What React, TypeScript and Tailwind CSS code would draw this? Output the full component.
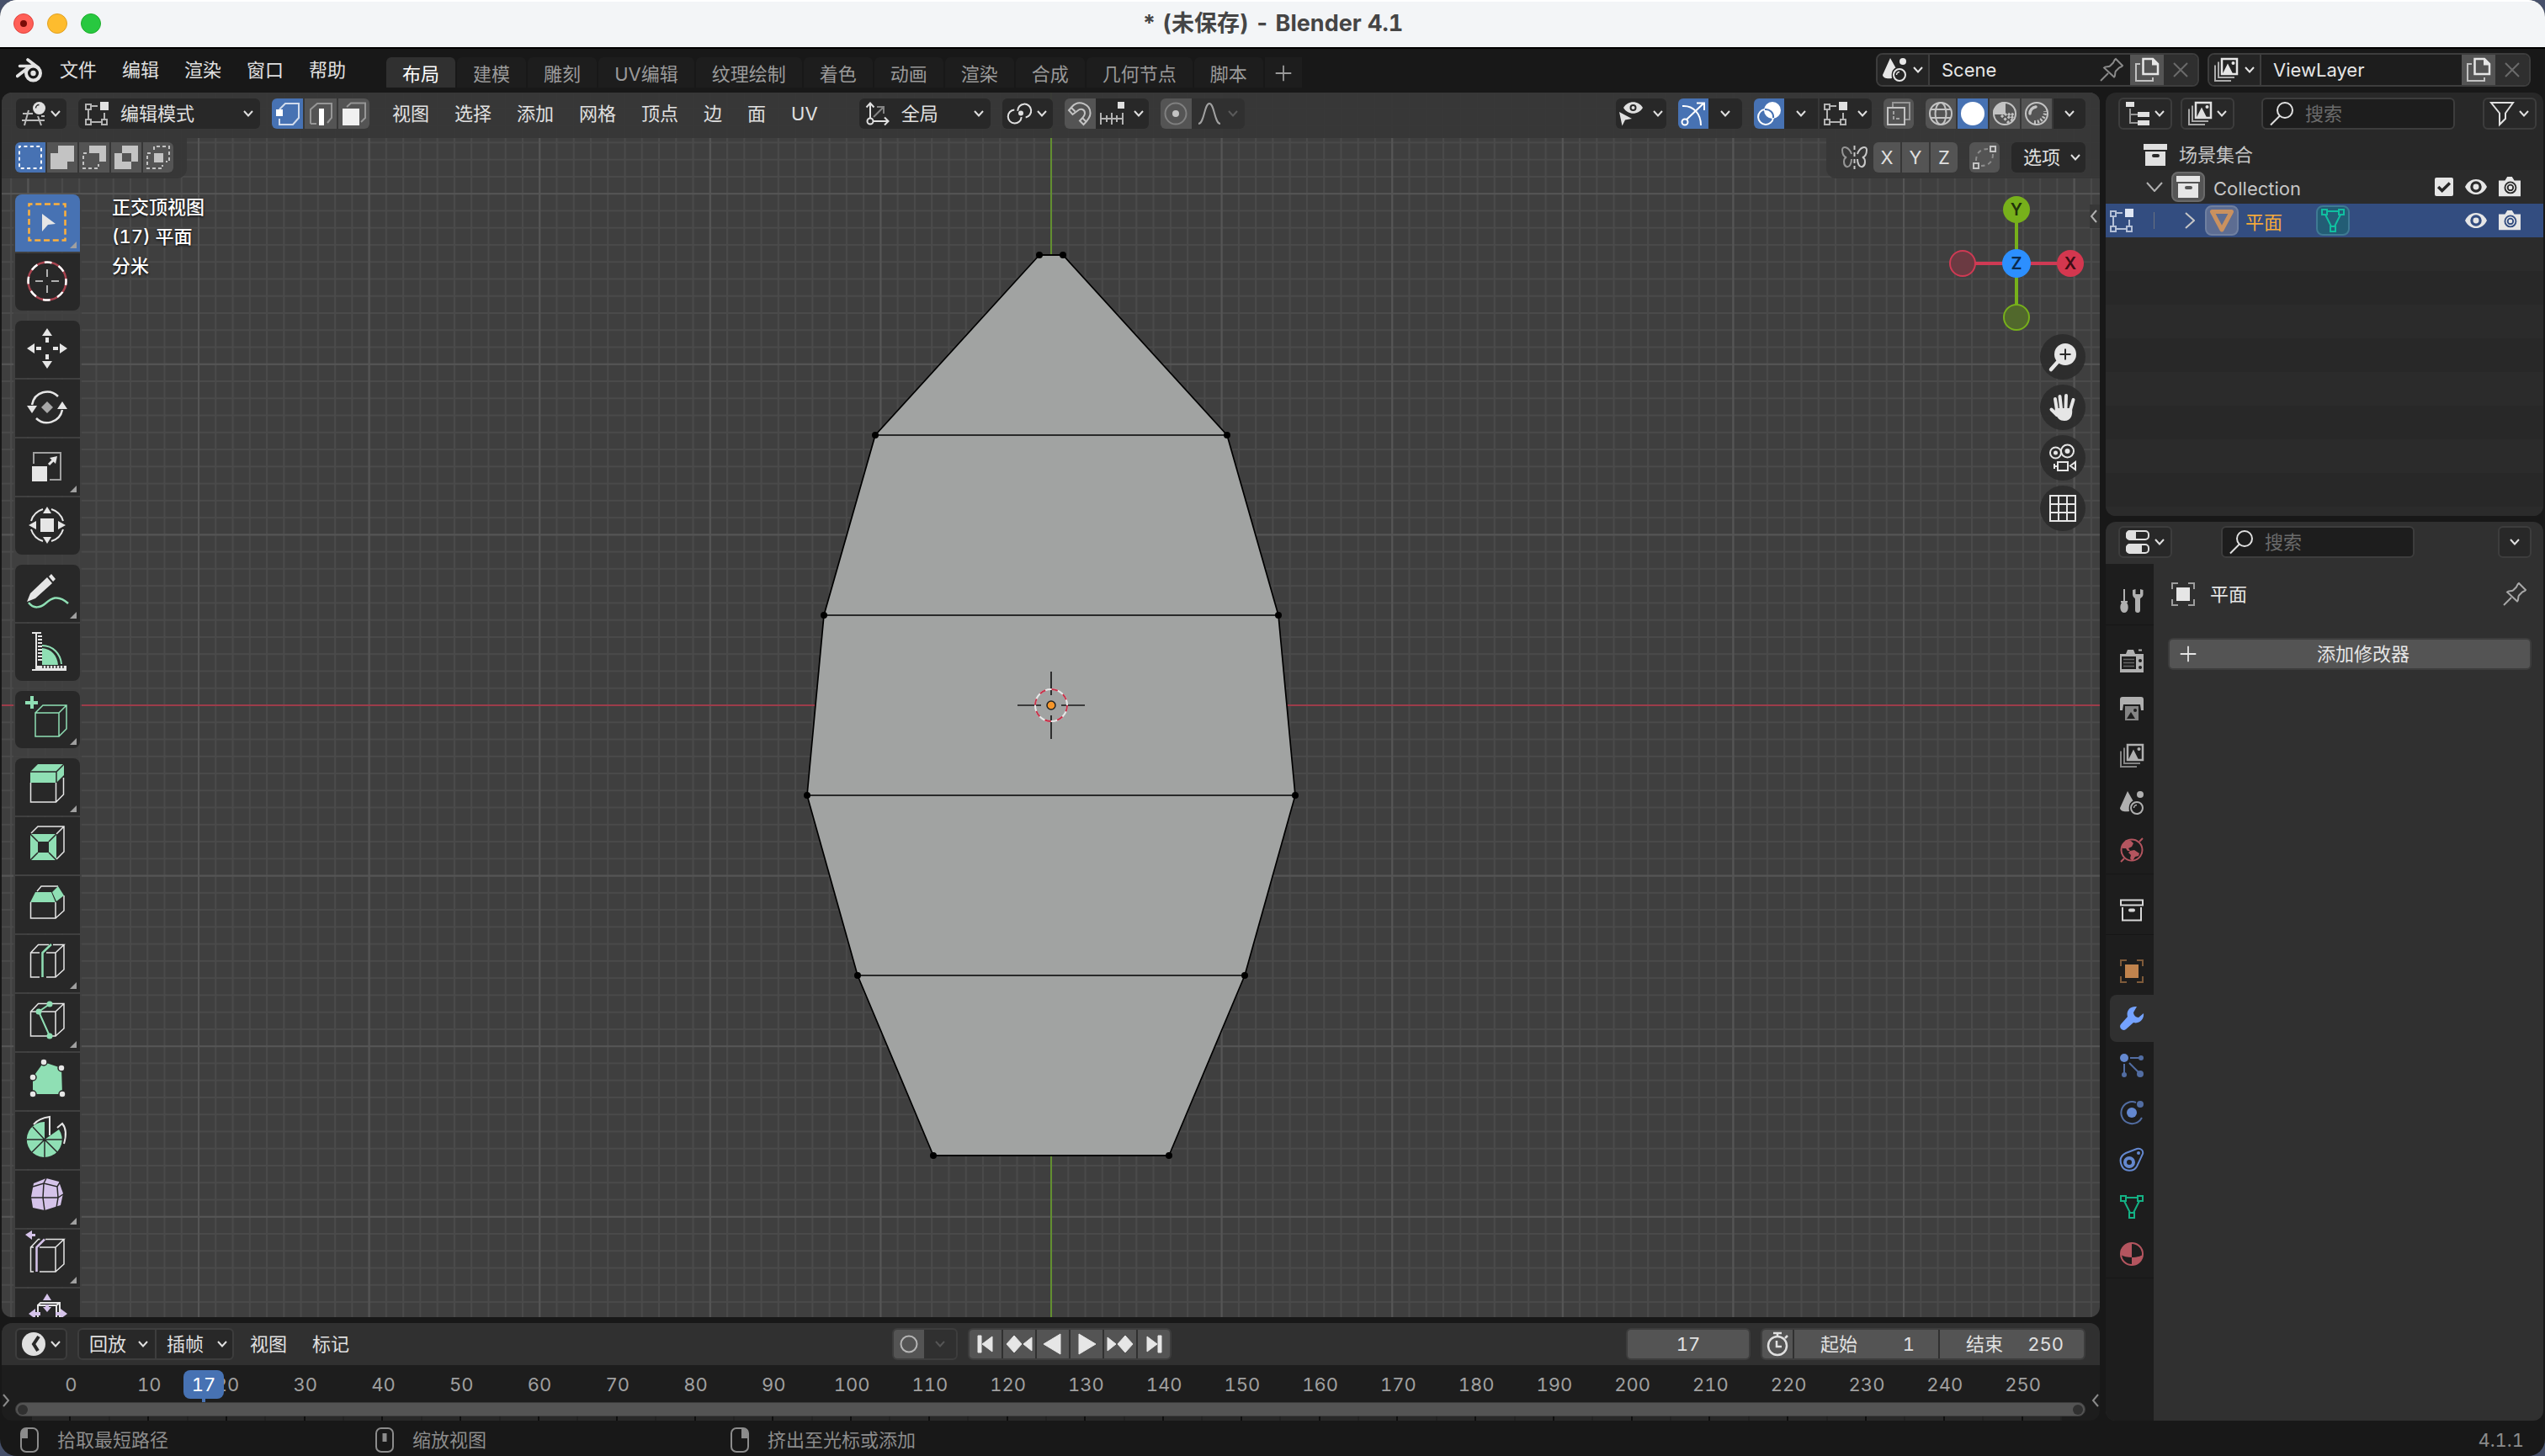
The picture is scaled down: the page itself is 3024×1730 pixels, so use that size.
import type { ReactNode } from 'react';

type IconProps = { className?: string };

const Svg = ({ className = 'w-7 h-7', size = 28, children }: IconProps & { size?: number; children: ReactNode }) => (
  <svg
    viewBox={`0 0 ${size} ${size}`}
    className={`shrink-0 overflow-visible ${className}`}
    fill="none"
    stroke="currentColor"
    strokeWidth="2"
    aria-hidden="true"
  >
    {children}
  </svg>
);

const Chevron = ({ className = '' }: IconProps) => (
  <svg viewBox="0 0 12 8" className={`w-3 h-2 shrink-0 ${className}`} fill="none" stroke="currentColor" strokeWidth="2" aria-hidden="true">
    <path d="M1 1l5 5.500 5-5.500" />
  </svg>
);

/* ---------- 28px icons ---------- */

const BlenderLogo = () => (
  <svg viewBox="0 0 31 29" className="w-[31px] h-[29px] shrink-0" fill="none" stroke="#e3e3e3" aria-hidden="true">
    <circle cx="20.500" cy="18" r="8.500" strokeWidth="4" />
    <circle cx="20.500" cy="18" r="3.200" fill="#e3e3e3" stroke="none" />
    <path d="M1.500 21.500L17 9.500M4.500 9.500h14M14 2l12.500 9.500" strokeWidth="3.600" strokeLinecap="round" />
  </svg>
);

const SceneIcon = (p: IconProps) => (
  <Svg {...p}>
    <path d="M9 0l6.500 11.500c-4 2-5.500 6-4.500 12.500C5 25 0 23.500 0 20z" fill="currentColor" stroke="none" />
    <circle cx="24" cy="4" r="4" fill="currentColor" stroke="none" />
    <circle cx="20" cy="20" r="7" />
    <path d="M16.500 20a3.500 3.500 0 0 1 3.500-3.500" strokeWidth="1.500" />
  </Svg>
);

const LayersIcon = (p: IconProps) => (
  <Svg {...p}>
    <path d="M9 1h18v18H9z" strokeWidth="2.500" />
    <path d="M10 18.500l6-12 6 12z" fill="currentColor" stroke="none" />
    <circle cx="22.500" cy="6" r="2" fill="currentColor" stroke="none" />
    <path d="M5 4.500v18.500h19M1 8.500v18.500h19" opacity=".7" />
  </Svg>
);

const CopyIcon = (p: IconProps) => (
  <Svg {...p}>
    <path d="M9.500 1h11.500l6 6v12H9.500z" strokeWidth="2.500" />
    <path d="M20 0v8.500h8z" fill="currentColor" stroke="none" />
    <path d="M6 7H1v20h20v-4" opacity=".75" />
  </Svg>
);

const PinIcon = (p: IconProps) => (
  <Svg {...p}>
    <path d="M19 1l8 8c-1 2-3 1.500-4 2.500l-4 4c-1.500 1.500 0 6-2 7L5 11.500c1.500-2 5.500-.5 7-2l4-4C17 4 17 2 19 1z" />
    <path d="M10 18l-9 9" />
  </Svg>
);

const CloseIcon = (p: IconProps) => (
  <Svg {...p}>
    <path d="M6 6l16 16M22 6L6 22" />
  </Svg>
);

const EditModeIcon = (p: IconProps) => (
  <Svg {...p}>
    <path d="M1 3h6v6H1zM1 21h6v6H1zM20 21h6v6h-6zM7 5h8M4 9v12M7 24h13M23 13v8" opacity=".75" />
    <path d="M18 0h10v10H18z" fill="currentColor" stroke="none" />
  </Svg>
);

const View3DIcon = () => (
  <Svg>
    <path d="M1 14h12M0 22h27M8 10L3 28M19 17l4 11M23 17h4" opacity=".8" />
    <circle cx="20.500" cy="7.500" r="7.500" fill="currentColor" stroke="none" />
    <path d="M16.500 7.500a4 4 0 0 1 4-4" stroke="#282828" strokeWidth="1.500" />
  </Svg>
);

const VertexIcon = () => (
  <Svg>
    <path d="M4 9l7-7h16v17l-7 8H4v-7" opacity=".75" />
    <path d="M0 9h8v8H0z" fill="currentColor" stroke="none" />
  </Svg>
);

const EdgeIcon = () => (
  <Svg>
    <path d="M2 26V9l8-7h17v17l-5 6M2 26h7" opacity=".6" />
    <path d="M12 8h6v20h-6z" fill="#fff" stroke="none" />
  </Svg>
);

const FaceIcon = () => (
  <Svg>
    <path d="M5 6l5-4.500h17V19l-5 5" opacity=".6" />
    <path d="M0 8h20v20H0z" fill="#f0f0f0" stroke="none" />
  </Svg>
);

const OrientationIcon = () => (
  <Svg>
    <circle cx="5" cy="23" r="3.500" />
    <path d="M5 19V3M0.500 6.500L5 1.500l4.500 5M9 23h17M22 18.500l4.500 4.500-4.500 4.500" />
    <path d="M9 18L20 7M13 6h8v8" opacity=".5" />
  </Svg>
);

const PivotIcon = () => (
  <Svg>
    <path d="M11 11a8 8 0 1 1 10 7M16 18a8 8 0 1 1-9-8" transform="rotate(4 14 14)" />
    <circle cx="15" cy="13.500" r="3" fill="currentColor" stroke="none" />
  </Svg>
);

const MagnetIcon = () => (
  <Svg>
    <path d="M1 10l4-4.500C13-3 27 3 26.500 14c0 5-4 9-8 13l-4.500-4.500c3-3 6-5.500 6-9 0-5-5-6-8.500-3L5.500 15z" />
    <path d="M4 7l4.500 4.500M22 24l-4.500-4.500" />
  </Svg>
);

const IncrementIcon = () => (
  <Svg>
    <path d="M1 13v14M27 13v14M1 20h26M8 16v8M14 13v14M20 16v8" opacity=".75" />
    <path d="M21 0h8v8h-8z" fill="currentColor" stroke="none" />
  </Svg>
);

const ProportionalIcon = () => (
  <Svg>
    <circle cx="14" cy="14" r="12.500" opacity=".4" />
    <circle cx="14" cy="14" r="4" fill="currentColor" stroke="none" />
  </Svg>
);

const FalloffIcon = () => (
  <Svg>
    <path d="M1 26c7 0 7-24 13-24s6 24 13 24" />
  </Svg>
);

const VisibilityIcon = () => (
  <Svg>
    <path d="M5 7c5-9 18-9 23 0-5 9-18 9-23 0z" fill="currentColor" stroke="none" />
    <circle cx="16.500" cy="7" r="4" fill="#282828" stroke="none" />
    <circle cx="16.500" cy="7" r="2" fill="currentColor" stroke="none" />
    <path d="M0 12l15 8-8 1.500-3.500 7z" fill="currentColor" stroke="none" />
  </Svg>
);

const GizmoIcon = () => (
  <Svg>
    <path d="M1 5c13-1 22 9 22 23M6 21L26 2M18 1.500h9V10" />
    <circle cx="4" cy="24" r="3.500" fill="#4772b3" />
  </Svg>
);

const OverlayIcon = () => (
  <Svg>
    <circle cx="18" cy="10" r="10" fill="currentColor" stroke="none" />
    <path d="M9 9a9 9 0 1 0 10 10" />
    <path d="M9 9a9 9 0 0 1 10 10" stroke="#4772b3" />
  </Svg>
);

const XrayIcon = () => (
  <Svg>
    <path d="M7 6V1h20v20h-5" opacity=".6" />
    <path d="M1 7h20v20H1z" />
    <path d="M8 11v9h9" strokeDasharray="4 2" opacity=".7" />
  </Svg>
);

const WireIcon = () => (
  <Svg>
    <circle cx="14" cy="14" r="13" />
    <ellipse cx="14" cy="14" rx="6.500" ry="13" />
    <path d="M2 9h24M2 19h24" />
  </Svg>
);

const SolidIcon = () => (
  <Svg>
    <circle cx="14" cy="14" r="14" fill="currentColor" stroke="none" />
  </Svg>
);

const MatPreviewIcon = () => (
  <Svg>
    <circle cx="14" cy="14" r="13" />
    <path d="M14 14V1A13 13 0 0 0 1 14z" fill="currentColor" />
    <path d="M14 14l10 9M18 14l8 7M10 16l9 9M22 14l4 3" strokeWidth="3" strokeDasharray="3 2" />
  </Svg>
);

const RenderedIcon = () => (
  <Svg>
    <circle cx="14" cy="14" r="13" />
    <path d="M6 14a8 8 0 0 1 7-8" strokeWidth="3.500" strokeLinecap="round" />
    <path d="M11 24a12 12 0 0 0 13-13" strokeWidth="4" strokeDasharray="2 2" />
  </Svg>
);

const ButterflyIcon = () => (
  <svg viewBox="0 0 31 28" className="w-[31px] h-7 shrink-0" fill="none" stroke="#c8c8c8" strokeWidth="2" aria-hidden="true">
    <path d="M15.500 0v28" strokeDasharray="5 3" />
    <path d="M12 10C9 1 1 0 1 5c0 4 1 8 5 9-4 1-4 9 0 11 4 1 6-4 6-9" opacity=".65" />
    <path d="M19 10c3-9 11-10 11-5 0 4-1 8-5 9 4 1 4 9 0 11-4 1-6-4-6-9" />
  </svg>
);

const AutoMergeIcon = () => (
  <Svg>
    <path d="M21 1h6v6h-6zM1 21h6v6H1z" />
    <path d="M4 18C4 9 9 4 18 4M24 10c0 9-5 14-14 14" strokeDasharray="5 4" opacity=".5" />
  </Svg>
);

const FilterIcon = () => (
  <Svg>
    <path d="M1 1h26l-9 12.500V20l-7 7V13.500z" />
  </Svg>
);

const SearchIcon = () => (
  <Svg>
    <circle cx="18" cy="10" r="9" />
    <path d="M12 16.500L1 27.500" />
  </Svg>
);

const OutlinerIcon = () => (
  <Svg>
    <path d="M5 8v17h9M5 15h9" opacity=".6" />
    <path d="M0 0h10v6H0zM14 12h14v6H14zM14 22h14v6H14z" fill="currentColor" stroke="none" />
  </Svg>
);

const PropertiesIcon = () => (
  <Svg>
    <rect x="1" y="1" width="26" height="10" rx="4" />
    <path d="M5 0h7v12H5a5 5 0 0 1-5-5V5a5 5 0 0 1 5-5zM5 16h14v12H5a5 5 0 0 1-5-5v-2a5 5 0 0 1 5-5z" fill="currentColor" stroke="none" />
    <rect x="1" y="17" width="26" height="10" rx="4" />
  </Svg>
);

const CollectionIcon = (p: IconProps) => (
  <Svg {...p}>
    <path d="M0 1h28v7H0z" fill="currentColor" stroke="none" />
    <path d="M2 10h24v17H2zM12 13a1.500 1.500 0 0 0 0 4h5a1.500 1.500 0 0 0 0-4z" fill="currentColor" fillRule="evenodd" stroke="none" />
  </Svg>
);

const CollectionOutlineIcon = () => (
  <Svg>
    <path d="M1 1.500h26v6H1zM3 10v15.500h22V10" />
    <path d="M12 13.500h4" strokeWidth="4" strokeLinecap="round" />
  </Svg>
);

const EyeIcon = () => (
  <Svg className="w-[26px] h-[26px]">
    <path d="M0 14C6 1 22 1 28 14 22 27 6 27 0 14z" fill="currentColor" stroke="none" />
    <circle cx="14" cy="14" r="5.500" stroke="var(--hole)" strokeWidth="3.500" />
  </Svg>
);

const CameraIcon = () => (
  <Svg className="w-[26px] h-[26px]">
    <path d="M0 6h8l3-5h6l3 5h8v20H0z" fill="currentColor" stroke="none" />
    <circle cx="15" cy="15" r="7" stroke="var(--hole)" />
    <circle cx="15" cy="15" r="3.500" stroke="var(--hole)" />
  </Svg>
);

const MeshTriIcon = () => (
  <Svg>
    <path d="M2.500 3.500h23L14 25z" strokeWidth="5" strokeLinejoin="round" />
  </Svg>
);

const MeshDataIcon = () => (
  <Svg>
    <path d="M1 1h6v6H1zM21 1h6v6h-6zM11 21h6v6h-6zM7 3h14M5 7l7 14M23 7l-7 14" />
  </Svg>
);

const ToolPropIcon = () => (
  <Svg>
    <path d="M5 0v14" />
    <path d="M1 14h8v2H8c3 4 2 12-3 12s-6-8-3-12H1z" fill="currentColor" stroke="none" />
    <path
      d="M15 1v5c0 4 3 4 3 6v13a3 3 0 0 0 6 0V12c0-2 3.500-2 3.500-6V1L24 0v6h-5.500V0zM21 23.500v2"
      fill="currentColor"
      stroke="none"
    />
  </Svg>
);

const RenderIcon = () => (
  <Svg>
    <path
      d="M7 5l2-5h7l2 5h10v22H0V5zM2 8v15h17V8z"
      fill="currentColor"
      fillRule="evenodd"
      stroke="none"
    />
    <path d="M4 11.500h13M4 15.500h13M4 19.500h13" opacity=".5" strokeWidth="1.500" />
    <path d="M22 0.500h4" />
    <circle cx="24" cy="13" r="2" fill="#1d1d1d" stroke="none" />
    <circle cx="24" cy="21" r="2" fill="#1d1d1d" stroke="none" />
  </Svg>
);

const OutputIcon = () => (
  <Svg>
    <path d="M3 0h22a3 3 0 0 1 3 3v13h-3l-1-7H4l-1 7H0V3a3 3 0 0 1 3-3z" fill="currentColor" stroke="none" />
    <path d="M6 11h16v17H6z" fill="currentColor" opacity=".7" stroke="none" />
    <path d="M8 26l5-8 5 8z" fill="#1d1d1d" stroke="none" />
    <circle cx="18" cy="16" r="2" fill="#1d1d1d" stroke="none" />
  </Svg>
);

const WorldIcon = () => (
  <Svg>
    <circle cx="14" cy="14" r="12.500" />
    <path d="M23 4l4-4M5 24l-4 4" />
    <path d="M2 9l5-7 6 1 3 3-2 4-4 2 2 3h-3l-2-3-4 0zM12 15l5-1 6 4-1 3-4 1-3 5-3-3 1-4-3-3z" fill="currentColor" stroke="none" />
  </Svg>
);

const ObjectIcon = () => (
  <Svg>
    <path d="M6 6h16v16H6z" fill="currentColor" stroke="none" />
    <path d="M1 8V1h7M20 1h7v7M27 20v7h-7M8 27H1v-7" opacity=".6" />
  </Svg>
);

const WrenchIcon = () => (
  <Svg>
    <path
      d="M20 0c-8-1-13 5-11 12L1 21c-3 4 2 9 6 6l9-8c7 2 13-4 12-11l-6 5c-3 0-6-3-6-6z"
      fill="currentColor"
      stroke="none"
    />
  </Svg>
);

const ParticlesIcon = () => (
  <Svg>
    <circle cx="5" cy="5" r="5" fill="currentColor" stroke="none" />
    <g opacity=".75">
      <path d="M12 5h11M5 12v11M11 11l12 12" />
      <circle cx="25" cy="5" r="3" fill="currentColor" stroke="none" />
      <circle cx="5" cy="25" r="3" fill="currentColor" stroke="none" />
      <circle cx="24" cy="24" r="4" fill="currentColor" stroke="none" />
    </g>
  </Svg>
);

const PhysicsIcon = () => (
  <Svg>
    <circle cx="14" cy="14" r="6" fill="currentColor" stroke="none" />
    <g opacity=".75">
      <path d="M19 2A13 13 0 1 0 26 20" />
      <circle cx="24" cy="4" r="4" fill="currentColor" stroke="none" />
    </g>
  </Svg>
);

const ConstraintIcon = () => (
  <Svg>
    <path d="M7 6L20 1c5-1 8 2 7 6l-7 15c-4 7-15 6-18-1S1 9 7 6z" />
    <circle cx="11" cy="17" r="5" strokeWidth="4" />
    <circle cx="22" cy="6" r="2" fill="currentColor" stroke="none" />
  </Svg>
);

const MaterialIcon = () => (
  <Svg>
    <circle cx="14" cy="14" r="13" />
    <path d="M14 1v17C9 18 4 17 1 15 1 7 7 1 14 1zM14 27v-9c5 0 10-1 13-3-1 7-6 12-13 12z" fill="currentColor" stroke="none" />
  </Svg>
);

const TimelineIcon = () => (
  <Svg>
    <circle cx="14" cy="14" r="14" fill="currentColor" stroke="none" />
    <path d="M20 5l-6 9 5 8" stroke="#282828" strokeWidth="4" />
  </Svg>
);

const StopwatchIcon = () => (
  <Svg>
    <circle cx="14" cy="16" r="11" strokeWidth="2.500" />
    <path d="M9 1h10M14 1v4M13 10v7h6M23 7l3-3" strokeWidth="2.500" />
  </Svg>
);

/* ---------- toolbar icons, drawn on a 48px square ---------- */

const Tool48 = ({ children }: { children: ReactNode }) => (
  <Svg size={48} className="w-12 h-12">
    {children}
  </Svg>
);

const GREEN = '#8fdfb4';
const LILAC = '#d5c3ea';

const toolGroups: { name: string; menu?: boolean; active?: boolean; icon: ReactNode }[][] = [
  [
    {
      name: '框选',
      menu: true,
      active: true,
      icon: (
        <Tool48>
          <path d="M2.500 2.500h43v43h-43z" stroke="#ffb13b" strokeDasharray="7 3.750" strokeDashoffset="3" strokeWidth="2.500" />
          <path d="M18 14l16 12-9 1-7 8z" fill="#e6e6e6" stroke="none" />
        </Tool48>
      ),
    },
    {
      name: '游标',
      icon: (
        <Tool48>
          <circle cx="24" cy="24" r="22.500" stroke="#a8434f" strokeWidth="2.500" />
          <circle cx="24" cy="24" r="22.500" stroke="#fff" strokeWidth="2.500" strokeDasharray="8.840" strokeDashoffset="4" />
          <path d="M24 10v9M24 29v9M10 24h9M29 24h9" stroke="#b0b0b0" />
        </Tool48>
      ),
    },
  ],
  [
    {
      name: '移动',
      icon: (
        <Tool48>
          <path
            d="M24 0l6 9H18zM24 48l6-9H18zM0 24l9-6v12zM48 24l-9-6v12zM22 11h4v6h-4zM22 31h4v6h-4zM11 22h6v4h-6zM31 22h6v4h-6z"
            fill="currentColor"
            stroke="none"
          />
        </Tool48>
      ),
    },
    {
      name: '旋转',
      icon: (
        <Tool48>
          <path d="M6 21C9 5 27 1 37 11M42 27C39 42 21 47 11 37" strokeWidth="2.500" />
          <path d="M0 22h12l-6 9zM36 26h12l-6-9z" fill="currentColor" stroke="none" />
          <path d="M24 17l7 7-7 7-7-7z" fill="#a8a8a8" stroke="none" />
        </Tool48>
      ),
    },
    {
      name: '缩放',
      menu: true,
      icon: (
        <Tool48>
          <path d="M8 21V8h32v32H27" stroke="#a0a0a0" />
          <path d="M6 24h18v18H6z" fill="currentColor" stroke="none" />
          <path d="M26 22l7-7" strokeWidth="3" />
          <path d="M36 12l-9 2 7 7z" fill="currentColor" stroke="none" />
        </Tool48>
      ),
    },
    {
      name: '变换',
      icon: (
        <Tool48>
          <path d="M19 5A21 21 0 0 0 5 19M29 5a21 21 0 0 1 14 14M19 43A21 21 0 0 1 5 29M29 43a21 21 0 0 0 14-14" />
          <path d="M16 16h16v16H16zM24 2l5 8H19zM24 46l5-8H19zM2 24l9-5v10zM46 24l-9-5v10z" fill="currentColor" stroke="none" />
        </Tool48>
      ),
    },
  ],
  [
    {
      name: '标注',
      menu: true,
      icon: (
        <Tool48>
          <path d="M2 36c6 8 14 6 20 1s14-12 27 0" stroke={GREEN} strokeWidth="2.500" />
          <path d="M0 35l4-10L24 6l6 7-20 18zM26 5l3-3 5 6-3 3z" fill="currentColor" stroke="none" />
        </Tool48>
      ),
    },
    {
      name: '测量',
      icon: (
        <Tool48>
          <path d="M18 17c13 0 22 10 23 22" stroke={GREEN} />
          <path d="M18 20c11 1 18 9 19 20H18z" fill={GREEN} stroke="none" />
          <path d="M6 1h11v2h-5v38h35v6H6v-2h4V3H6z" fill="currentColor" stroke="none" />
          <path d="M13 6h5M13 10h5M13 14h5M13 18h5M13 22h5M13 26h5M13 30h5M13 34h5" strokeWidth="2" />
          <path d="M19 40v4M23 40v4M27 40v4M31 40v4M35 40v4M39 40v4M43 40v4" stroke="#282828" strokeWidth="1.500" />
        </Tool48>
      ),
    },
  ],
  [
    {
      name: '添加立方体',
      menu: true,
      icon: (
        <Tool48>
          <path d="M10 17h28v28H10zM10 17l9-9h28v28l-9 9M38 17l9-9" stroke={GREEN} strokeWidth="1.500" />
          <path d="M6-3v15M-2 5h15" stroke={GREEN} strokeWidth="4" />
        </Tool48>
      ),
    },
  ],
  [
    {
      name: '挤出选区',
      menu: true,
      icon: (
        <Tool48>
          <path d="M4.500 20v23h30V20M34.500 43l9-9V14" strokeWidth="1.500" />
          <path d="M4 7l9-9h31v13l-9 9H4z" fill={GREEN} stroke="none" />
          <path d="M4 7h31v13M35 7l9-9" stroke="#282828" strokeWidth="1.500" />
        </Tool48>
      ),
    },
    {
      name: '内插面',
      icon: (
        <Tool48>
          <path d="M5 10l8-8h31v30l-9 9M35 11l9-9" strokeWidth="1.500" />
          <path d="M4 11h31v31H4zM13 20v13h13V20z" fill={GREEN} fillRule="evenodd" stroke="none" />
          <path d="M4 11l9 9M35 11l-9 9M4 42l9-9M35 42l-9-9" stroke="#282828" strokeWidth="1.500" />
        </Tool48>
      ),
    },
    {
      name: '倒角',
      icon: (
        <Tool48>
          <path d="M4.500 22v19H34V22M34 41l10-9V14M12 9l5-6h20" strokeWidth="1.500" />
          <path d="M4 22l6-12h19l5 12zM30 10l7-7 7 11-9 7z" fill={GREEN} stroke="none" />
        </Tool48>
      ),
    },
    {
      name: '环切',
      menu: true,
      icon: (
        <Tool48>
          <path d="M15 12H4.500v29H15M23 12h11v29H23M4.500 12l9-9.500H26M34 12l10-9.500H31M44 2.500V32L34 41" strokeWidth="1.500" />
          <path d="M18.500 41V12L29 2" stroke={GREEN} strokeWidth="2.500" />
        </Tool48>
      ),
    },
    {
      name: '切割',
      menu: true,
      icon: (
        <Tool48>
          <path d="M4.500 12H34v29H4.500zM4.500 12l9-9.500H44V32l-10 9M34 12l10-9.500" strokeWidth="1.500" />
          <path d="M27 3L14 12l13 29" stroke={GREEN} />
          <g fill={GREEN} stroke="none">
            <circle cx="27" cy="3" r="3.500" />
            <circle cx="14" cy="12" r="3.500" />
            <circle cx="27" cy="41" r="3.500" />
          </g>
        </Tool48>
      ),
    },
    {
      name: '多边形建形',
      icon: (
        <Tool48>
          <path d="M7 40V20L20 2l21 7 1 31z" fill={GREEN} stroke="none" />
          <g fill="#e6e6e6" stroke="#282828" strokeWidth="1.500">
            <circle cx="7" cy="40" r="4" />
            <circle cx="42" cy="40" r="4" />
            <circle cx="41" cy="9" r="4" />
            <circle cx="20" cy="2" r="4" />
            <circle cx="7" cy="20" r="4" />
          </g>
        </Tool48>
      ),
    },
    {
      name: '旋绕',
      icon: (
        <Tool48>
          <path d="M8 6C13 0 19-2 27-3v22M36 10l6-5c5 6 5 14 2 24" strokeWidth="2" />
          <path d="M21 24V3a21 21 0 1 0 17 9z" fill={GREEN} stroke="none" />
          <path d="M21 24H0M21 24h21M21 24v21M21 24L7 9M21 24L6 39M21 24l15 15" stroke="#282828" strokeWidth="1.500" />
        </Tool48>
      ),
    },
    {
      name: '光滑',
      menu: true,
      icon: (
        <Tool48>
          <path d="M8 6l15-6 15 4 5 14-3 14-19 6-14-3-2-13z" fill={LILAC} stroke="none" />
          <path d="M7 10l13-4 16 4 3-5M20 6l3-6M20 6l-1 17 2 15M36 10l1 13-2 12M5 23h32l6-4" stroke="#282828" strokeWidth="1.500" />
        </Tool48>
      ),
    },
    {
      name: '边线滑移',
      menu: true,
      icon: (
        <Tool48>
          <path d="M8 12H4.500v29H8M15 12h19v29H15M4.500 12l9-9.500h2M34 12l10-9.500H22M44 2.500V32L34 41" strokeWidth="1.500" />
          <path d="M11.500 41V12L21 2.500" stroke={LILAC} strokeWidth="2.500" />
          <path d="M-2-3l8-5v4h4v3H6v4z" fill={LILAC} stroke="none" />
        </Tool48>
      ),
    },
    {
      name: '法向缩放',
      menu: true,
      icon: (
        <Tool48>
          <path d="M13 11h22v24H13zM13 11l3-3h23v26l-4 3M35 11l4-3" />
          <path d="M24-3l5 8H19zM24 19l5-6h-3v-3h-4v3h-3zM2 21l8-6v4h6v4h-6v4zM48 21l-8-6v4h-6v4h6v4z" fill={LILAC} stroke="none" />
        </Tool48>
      ),
    },
  ],
];

/* ---------- shared controls ---------- */

const MenuButton = ({ label, outlined, className = '', children }: { label: string; outlined?: boolean; className?: string; children?: ReactNode }) => (
  <button
    aria-label={label}
    aria-haspopup="menu"
    className={`flex items-center justify-center gap-1.5 rounded-md bg-[#282828] ${outlined ? 'h-[38px] border-2 border-[#3d3d3d]' : 'h-9'} ${className}`}
  >
    {children}
    <Chevron />
  </button>
);

const Toggle = ({ label, on, className = '', children }: { label: string; on?: boolean; className?: string; children: ReactNode }) => (
  <button
    aria-label={label}
    aria-pressed={!!on}
    className={`h-9 flex items-center justify-center ${on ? 'bg-[#4772b3] text-white' : 'bg-[#545454] text-[#c3c3c3]'} ${className}`}
  >
    {children}
  </button>
);

const MenuBar = ({ items, className = '' }: { items: string[]; className?: string }) => (
  <nav className={`flex items-center gap-[30px] ${className}`}>
    {items.map((item) => (
      <button key={item}>{item}</button>
    ))}
  </nav>
);

const Dropdown = ({ label, value, icon, className = '' }: { label: string; value: string; icon: ReactNode; className?: string }) => (
  <label className={`h-9 flex items-center rounded-md bg-[#282828] px-2 ${className}`}>
    {icon}
    <select aria-label={label} className="appearance-none flex-1 min-w-0 bg-transparent pl-3.5 outline-none">
      <option>{value}</option>
    </select>
    <Chevron />
  </label>
);

const SearchBox = ({ className = '' }: IconProps) => (
  <label className={`h-[38px] flex items-center gap-3.5 rounded-md border-2 border-[#3d3d3d] bg-[#1d1d1d] px-2 ${className}`}>
    <SearchIcon />
    <input aria-label="搜索" placeholder="搜索" className="flex-1 min-w-0 bg-transparent outline-none placeholder:text-[#6b6b6b]" />
  </label>
);

/* ---------- window chrome ---------- */

const TitleBar = () => (
  <header className="h-14 shrink-0 px-4 grid grid-cols-[1fr_auto_1fr] items-center bg-[#f3f5f7] shadow-[inset_0_2px_#fff]">
    <div className="flex gap-4">
      <button aria-label="关闭" className="w-6 h-6 rounded-full bg-[#ff5f57] border border-[#e0443e] flex items-center justify-center">
        <span className="w-2 h-2 rounded-full bg-[#7a0c08]" />
      </button>
      <button aria-label="最小化" className="w-6 h-6 rounded-full bg-[#febc2e] border border-[#dfa023]" />
      <button aria-label="缩放" className="w-6 h-6 rounded-full bg-[#28c840] border border-[#1dad2c]" />
    </div>
    <h1 className="font-bold text-[27px] text-[#454545]">* (未保存) - Blender 4.1</h1>
  </header>
);

const workspaces = ['布局', '建模', '雕刻', 'UV编辑', '纹理绘制', '着色', '动画', '渲染', '合成', '几何节点', '脚本'];

const DataBlock = ({ label, value, pinned, children }: { label: string; value: string; pinned?: boolean; children: ReactNode }) => (
  <div className="w-96 h-10 flex rounded-lg border-2 border-[#3d3d3d] overflow-hidden bg-[#1d1d1d] text-[#e6e6e6]">
    <button aria-label={label} className="w-[62px] flex items-center justify-center gap-2 bg-[#242424] border-r-2 border-[#3d3d3d]">
      {children}
      <Chevron />
    </button>
    <input aria-label={label} defaultValue={value} className="flex-1 min-w-0 bg-transparent pl-3.5 outline-none" />
    {pinned && (
      <button aria-label="固定" className="px-2 text-[#8a8a8a]">
        <PinIcon />
      </button>
    )}
    <button aria-label={`新建 ${value}`} className="w-10 flex items-center justify-center bg-[#545454]">
      <CopyIcon />
    </button>
    <button aria-label={`移除 ${value}`} className="w-10 flex items-center justify-center bg-[#2f2f2f] text-[#6b6b6b]">
      <CloseIcon />
    </button>
  </div>
);

const TopBar = () => (
  <div className="h-[54px] shrink-0 flex items-center pl-[19px] pr-[17px] shadow-[inset_0_2px_#000]">
    <BlenderLogo />
    <MenuBar items={['文件', '编辑', '渲染', '窗口', '帮助']} className="ml-[21px]" />
    <div role="tablist" className="ml-12 mt-1.5 flex gap-0.5">
      {workspaces.map((name, i) => (
        <button
          key={name}
          role="tab"
          aria-selected={i === 0}
          className={`h-9 px-[19px] pt-1 rounded-t-md ${i === 0 ? 'bg-[#303030] text-white' : 'bg-[#1d1d1d] text-[#9a9a9a]'}`}
        >
          {name}
        </button>
      ))}
      <button aria-label="添加工作区" className="w-11 pt-0.5 flex items-center justify-center bg-[#1d1d1d] text-[#9a9a9a]">
        <Svg className="w-5 h-5">
          <path d="M14 1v26M1 14h26" strokeWidth="2.500" />
        </Svg>
      </button>
    </div>
    <div className="ml-auto flex gap-2.5">
      <DataBlock label="场景" value="Scene" pinned>
        <SceneIcon />
      </DataBlock>
      <DataBlock label="视图层" value="ViewLayer">
        <LayersIcon />
      </DataBlock>
    </div>
  </div>
);

/* ---------- 3D viewport ---------- */

// [half width, y] of every edge loop, measured from the world origin
const loops = [
  [14, -535],
  [209, -321],
  [270, -107],
  [290, 107],
  [230, 321],
  [140, 535],
];

const outline = [...loops.map(([x, y]) => `${x},${y}`), ...[...loops].reverse().map(([x, y]) => `${-x},${y}`)].join(' ');

const SceneCanvas = () => (
  <svg className="absolute inset-0 w-full h-full" aria-label="三维视图">
    <defs>
      <pattern id="minor" width="20.260" height="20.260" patternUnits="userSpaceOnUse">
        <path d="M0 1h20.260M1 0v20.260" stroke="#4a4a4a" strokeWidth="2" />
      </pattern>
      <pattern id="major" width="202.600" height="202.600" patternUnits="userSpaceOnUse">
        <path d="M0 1h202.600M1 0v202.600" stroke="#555555" strokeWidth="2" />
      </pattern>
    </defs>
    <svg x="50%" y="50%" overflow="visible">
      <g transform="translate(-.5 -.5)">
        <rect x="-3000" y="-2000" width="6000" height="4000" fill="url(#minor)" />
        <rect x="-3000" y="-2000" width="6000" height="4000" fill="url(#major)" />
      </g>
      <g transform="translate(.5 .5)">
        <path d="M-3000 0h6000" stroke="#9c3c4a" strokeWidth="2" />
        <path d="M0-2000v4000" stroke="#628f30" strokeWidth="2" />
        <polygon points={outline} fill="#a1a3a2" />
        <g stroke="#000" strokeWidth="1.700">
          <polygon points={outline} fill="none" />
          {loops.map(([x, y]) => (
            <path key={y} d={`M${-x} ${y}h${2 * x}`} />
          ))}
        </g>
        {loops.map(([x, y]) => (
          <g key={y}>
            <circle cx={-x} cy={y} r="4" />
            <circle cx={x} cy={y} r="4" />
          </g>
        ))}
        <path d="M0-40v28M0 12v28M-40 0h28M12 0h28" stroke="#1a1a1a" strokeWidth="1.700" />
        <circle r="19" fill="none" stroke="#e8e8e8" strokeWidth="2" />
        <circle r="19" fill="none" stroke="#c8324a" strokeWidth="2" strokeDasharray="7.460" />
        <circle r="5" fill="#f5962a" stroke="#222" strokeWidth="1.500" />
      </g>
    </svg>
  </svg>
);

const ViewportHeader = () => (
  <div className="relative h-[54px] flex items-start gap-3.5 pt-[7px] px-[17px] bg-[#373737]/95">
    <MenuButton label="编辑器类型" className="w-[60px]">
      <View3DIcon />
    </MenuButton>
    <Dropdown label="模式" value="编辑模式" icon={<EditModeIcon />} className="w-[216px]" />
    <div className="flex gap-0.5 rounded-md overflow-hidden">
      <Toggle label="顶点选择" on className="w-[37px]">
        <VertexIcon />
      </Toggle>
      <Toggle label="边选择" className="w-[38px]">
        <EdgeIcon />
      </Toggle>
      <Toggle label="面选择" className="w-[37px]">
        <FaceIcon />
      </Toggle>
    </div>
    <MenuBar items={['视图', '选择', '添加', '网格', '顶点', '边', '面', 'UV']} className="ml-[13px] h-9" />
    <Dropdown label="变换坐标系" value="全局" icon={<OrientationIcon />} className="ml-[35px] w-[156px]" />
    <MenuButton label="轴心点" className="w-[60px]">
      <PivotIcon />
    </MenuButton>
    <div className="flex rounded-md overflow-hidden">
      <Toggle label="吸附" className="w-[37px]">
        <MagnetIcon />
      </Toggle>
      <MenuButton label="吸附至" className="w-[63px] rounded-none gap-3">
        <IncrementIcon />
      </MenuButton>
    </div>
    <div className="flex rounded-md overflow-hidden">
      <Toggle label="比例编辑" className="w-[37px]">
        <ProportionalIcon />
      </Toggle>
      <button aria-label="衰减" className="w-[63px] h-9 flex items-center justify-center gap-2 bg-[#303030]">
        <span className="text-[#a0a0a0]">
          <FalloffIcon />
        </span>
        <Chevron className="text-[#5a5a5a]" />
      </button>
    </div>

    <MenuButton label="物体可见性" className="ml-auto w-[60px] gap-3">
      <VisibilityIcon />
    </MenuButton>
    <div className="flex rounded-md overflow-hidden">
      <Toggle label="Gizmo" on className="w-9">
        <GizmoIcon />
      </Toggle>
      <MenuButton label="Gizmo 选项" className="w-10 rounded-none" />
    </div>
    <div className="flex rounded-md overflow-hidden">
      <Toggle label="叠加层" on className="w-9">
        <OverlayIcon />
      </Toggle>
      <MenuButton label="叠加层选项" className="w-[42px] rounded-none border-r-2 border-[#373737]" />
      <MenuButton label="网格叠加层" className="w-[62px] rounded-none gap-3">
        <EditModeIcon />
      </MenuButton>
    </div>
    <Toggle label="透视模式" className="w-9 rounded-md">
      <XrayIcon />
    </Toggle>
    <div className="flex gap-0.5 rounded-md overflow-hidden">
      <Toggle label="线框" className="w-9">
        <WireIcon />
      </Toggle>
      <Toggle label="实体" on className="w-9">
        <SolidIcon />
      </Toggle>
      <Toggle label="材质预览" className="w-9">
        <MatPreviewIcon />
      </Toggle>
      <Toggle label="渲染" className="w-9">
        <RenderedIcon />
      </Toggle>
      <MenuButton label="着色选项" className="w-[38px] rounded-none" />
    </div>
  </div>
);

const selectOps: { name: string; icon: ReactNode }[] = [
  { name: '设置', icon: <path d="M1 1h26v26H1z" strokeDasharray="4 3.430" strokeDashoffset="2" /> },
  { name: '扩展', icon: <path d="M9 0h19v19h-8v9H0V9h9z" fill="currentColor" stroke="none" /> },
  {
    name: '相减',
    icon: (
      <>
        <path d="M8 0h20v19h-8V9H8z" fill="currentColor" stroke="none" />
        <path d="M5 9H1v18h18v-5" strokeDasharray="4 3" />
      </>
    ),
  },
  {
    name: '反转',
    icon: <path d="M9 0h19v19h-8v9H0V9h9zM9 9v10h11V9z" fill="currentColor" fillRule="evenodd" stroke="none" />,
  },
  {
    name: '相交',
    icon: (
      <>
        <path d="M9 9h11v11H9z" fill="currentColor" stroke="none" />
        <path d="M5 9H1v18h18v-4M9 5V1h18v18h-4" strokeDasharray="4 3" />
      </>
    ),
  },
];

const ToolSettings = () => (
  <div className="relative h-12 flex justify-between">
    <div className="flex gap-0.5 items-start pt-[5px] pl-4 pr-4 rounded-br-xl bg-[#373737]/95">
      {selectOps.map((op, i) => (
        <Toggle key={op.name} label={op.name} on={i === 0} className="w-9 first:rounded-l-md last:rounded-r-md">
          <Svg>{op.icon}</Svg>
        </Toggle>
      ))}
    </div>
    <div className="flex items-start gap-3.5 pt-[5px] pl-[18px] pr-[17px] rounded-bl-xl bg-[#373737]/95">
      <div className="flex items-center gap-[7px]">
        <ButterflyIcon />
        <div className="flex gap-0.5">
          {['X', 'Y', 'Z'].map((axis) => (
            <Toggle key={axis} label={`镜像 ${axis}`} className="w-8 text-[#e0e0e0] first:rounded-l-md last:rounded-r-md">
              {axis}
            </Toggle>
          ))}
        </div>
      </div>
      <Toggle label="自动合并" className="w-9 rounded-md">
        <AutoMergeIcon />
      </Toggle>
      <button aria-haspopup="menu" className="h-9 w-[88px] flex items-center justify-between pl-3.5 pr-1.5 rounded-md bg-[#282828]">
        选项
        <Chevron />
      </button>
    </div>
  </div>
);

const Toolbar = () => (
  <div className="ml-3.5 px-0.5 w-[81px] shrink-0 flex flex-col gap-3 bg-[#404040]/85">
    {toolGroups.map((group, i) => (
      <div key={i} className="shrink-0 flex flex-col gap-0.5 rounded-lg overflow-hidden">
        {group.map((tool) => (
          <button
            key={tool.name}
            aria-label={tool.name}
            className={`relative h-[68px] shrink-0 pr-0.5 pb-0.5 flex items-center justify-center text-[#e6e6e6] ${tool.active ? 'bg-[#4772b3]' : 'bg-[#282828]'}`}
          >
            {tool.icon}
            {tool.menu && (
              <svg viewBox="0 0 8 8" className="absolute right-1 bottom-1 w-2 h-2" aria-hidden="true">
                <path d="M8 0v8H0z" fill="#a0a0a0" />
              </svg>
            )}
          </button>
        ))}
      </div>
    ))}
  </div>
);

const NavGizmo = () => (
  <svg viewBox="-82 -82 164 164" className="-mb-1 w-[164px] h-[164px]" fontSize="20" fontWeight="600" textAnchor="middle" aria-label="导航">
    <path d="M-49 0h98" stroke="#cf3a54" strokeWidth="4" />
    <path d="M0-49v98" stroke="#77b01b" strokeWidth="4" />
    <circle cx="-64" r="15" fill="#6b3a42" stroke="#cf3a54" strokeWidth="2" />
    <circle cy="64" r="15" fill="#51682c" stroke="#77b01b" strokeWidth="2" />
    <circle cx="64" r="16" fill="#d4374f" />
    <circle cy="-64" r="16" fill="#77b01b" />
    <circle r="17" fill="#2c8fff" />
    <text x="64" y="7" fill="#3d0d15">X</text>
    <text y="-57" fill="#22330a">Y</text>
    <text y="7" fill="#0b2a4c">Z</text>
  </svg>
);

const navButtons: { name: string; icon: ReactNode }[] = [
  {
    name: '缩放视图',
    icon: (
      <>
        <circle cx="19" cy="13" r="13" fill="currentColor" stroke="none" />
        <path d="M10 22L2 31" strokeWidth="4.500" strokeLinecap="round" />
        <path d="M19 6.500v13M12.500 13h13" stroke="#2b2b2b" />
      </>
    ),
  },
  {
    name: '平移视图',
    icon: (
      <>
        <path
          d="M9 19L7 6M14 17L12.500 3M19.500 17l.5-15M25 19l3.500-12M9 25L2.500 18.500"
          strokeWidth="4"
          strokeLinecap="round"
        />
        <path d="M7 17h20c1 8-1 15-9 15-6 0-8-3-12-10z" fill="currentColor" stroke="none" />
      </>
    ),
  },
  {
    name: '相机视角',
    icon: (
      <>
        <circle cx="7.500" cy="10" r="6.500" />
        <circle cx="21.500" cy="8" r="7.500" />
        <circle cx="7.500" cy="10" r="1.500" fill="currentColor" />
        <circle cx="21.500" cy="8" r="2" fill="currentColor" />
        <path d="M10 21h12v10H10zM6 23v6M6 26h4M31 21v9l-6-4.500z" />
      </>
    ),
  },
  { name: '正交视角', icon: <path d="M1 1h30v30H1zM11 1v30M21 1v30M1 11h30M1 21h30" /> },
];

const Viewport = () => (
  <section className="relative flex-1 min-h-0 flex flex-col rounded-xl overflow-hidden bg-[#3f3f3f]">
    <SceneCanvas />
    <ViewportHeader />
    <ToolSettings />
    <div className="relative flex-1 min-h-0 flex items-start mt-[19px] overflow-hidden">
      <Toolbar />
      <div className="ml-9 -mt-0.5 font-medium leading-[35px] text-white [text-shadow:0_1px_3px_#000]">
        <p>正交顶视图</p>
        <p>(17) 平面</p>
        <p>分米</p>
      </div>
      <div className="ml-auto mr-[17px] flex flex-col items-end gap-1.5">
        <NavGizmo />
        {navButtons.map((b) => (
          <button key={b.name} aria-label={b.name} className="w-[54px] h-[54px] rounded-full flex items-center justify-center bg-[#2b2b2b]/90 text-[#e6e6e6]">
            <Svg size={32} className="w-8 h-8">
              {b.icon}
            </Svg>
          </button>
        ))}
      </div>
      <button aria-label="展开侧栏" className="absolute right-0 top-3 w-3 h-7 flex items-center bg-[#373737] text-[#b0b0b0]">
        <svg viewBox="0 0 10 16" className="w-2.5 h-4" fill="none" stroke="currentColor" strokeWidth="2">
          <path d="M8 1L2 8l6 7" />
        </svg>
      </button>
    </div>
  </section>
);

/* ---------- timeline ---------- */

const frames = Array.from({ length: 26 }, (_, i) => i * 10);
const currentFrame = 17;

const transport: { name: string; path: string }[] = [
  { name: '跳到首帧', path: 'M5 4h4v20H5zM22 5v18L10 14z' },
  { name: '上一关键帧', path: 'M8 4l9 10-9 10-9-10zM29 6v16l-10-8z' },
  { name: '倒放', path: 'M23 2v24L3 14z' },
  { name: '播放', path: 'M5 2v24l20-12z' },
  { name: '下一关键帧', path: 'M20 4l9 10-9 10-9-10zM-1 6v16l10-8z' },
  { name: '跳到末帧', path: 'M19 4h4v20h-4zM6 5v18l12-9z' },
];

const NumberField = ({ label, value, className = '' }: { label: string; value: number; className?: string }) => (
  <label className={`flex items-center bg-[#545454] ${className}`}>
    {label}
    <input defaultValue={value} className="flex-1 min-w-0 bg-transparent text-right outline-none" />
  </label>
);

const Timeline = () => (
  <section className="relative shrink-0 rounded-xl overflow-hidden bg-[#1d1d1d]">
    <div className="h-[50px] grid grid-cols-[1fr_auto_1fr] items-center pl-4 pr-[17px] bg-[#303030]">
      <div className="flex items-center">
        <MenuButton label="编辑器类型" outlined className="w-[62px]">
          <TimelineIcon />
        </MenuButton>
        <div className="ml-3 h-[38px] flex rounded-md border-2 border-[#3d3d3d] bg-[#282828]">
          <button aria-haspopup="menu" className="w-[92px] flex items-center justify-between pl-3 pr-2 border-r-2 border-[#3d3d3d]">
            回放
            <Chevron />
          </button>
          <button aria-haspopup="menu" className="w-[90px] flex items-center justify-between pl-3 pr-1.5">
            插帧
            <Chevron />
          </button>
        </div>
        <MenuBar items={['视图', '标记']} className="ml-[19px]" />
      </div>

      <div className="mr-11 flex gap-3">
        <div className="w-[78px] h-[38px] flex rounded-md border-2 border-[#3d3d3d] overflow-hidden">
          <button aria-label="自动插帧" className="w-9 flex items-center justify-center bg-[#545454] text-[#b5b5b5]">
            <Svg>
              <circle cx="14" cy="14" r="9.500" />
            </Svg>
          </button>
          <button aria-label="自动插帧选项" className="flex-1 flex items-center justify-center text-[#555]">
            <Chevron />
          </button>
        </div>
        <div className="h-[38px] flex gap-0.5 rounded-md border-2 border-[#3d3d3d] overflow-hidden">
          {transport.map((b) => (
            <button key={b.name} aria-label={b.name} className="w-[38px] flex items-center justify-center bg-[#545454] text-[#e6e6e6]">
              <Svg>
                <path d={b.path} fill="currentColor" strokeWidth="1" strokeLinejoin="round" />
              </Svg>
            </button>
          ))}
        </div>
      </div>

      <div className="flex justify-end">
        <input aria-label="当前帧" defaultValue={currentFrame} className="w-[148px] h-[38px] rounded-md border-2 border-[#3d3d3d] bg-[#545454] text-center outline-none" />
        <div className="ml-3 h-[38px] flex gap-0.5 rounded-md border-2 border-[#3d3d3d] overflow-hidden">
          <button aria-label="预览范围" className="w-9 flex items-center justify-center bg-[#545454]">
            <StopwatchIcon />
          </button>
          <NumberField label="起始" value={1} className="w-[171px] pl-[31px] pr-7" />
          <NumberField label="结束" value={250} className="w-[171px] pl-[31px] pr-6" />
        </div>
      </div>
    </div>

    <div className="relative ml-9 mr-[45px]">
      <div className="h-11 pt-0.5 flex items-center text-[#a0a0a0]">
        {frames.map((f) => (
          <span key={f} className="flex-1 text-center">
            {f}
          </span>
        ))}
      </div>
      <div className="absolute inset-y-0 w-12 -ml-6 pt-1.5 flex flex-col items-center" style={{ left: `${((currentFrame / 10 + 0.5) / frames.length) * 100}%` }}>
        <span className="w-full h-[34px] rounded-lg bg-[#4772b3] text-white text-center leading-[34px]">{currentFrame}</span>
        <span className="w-1 h-8 bg-[#4772b3]" />
      </div>
    </div>
    <div className="relative ml-4 mr-[17px] h-[17px] px-0.5 flex items-center justify-between rounded-full border border-[#3d3d3d] bg-[#545454]">
      <span className="w-3 h-3 rounded-full bg-[#303030]" />
      <span className="w-3 h-3 rounded-full bg-[#303030]" />
    </div>
    <div className="ml-9 mr-[45px] h-[5px] flex bg-[#282828]">
      {frames.map((f) => (
        <span key={f} className="flex-1 flex justify-center border-r-2 border-[#222222]">
          <span className="w-0.5 bg-[#0f0f0f]" />
        </span>
      ))}
    </div>
    <svg viewBox="0 0 10 16" className="absolute left-0 bottom-4 w-2.5 h-4" fill="none" stroke="#8a8a8a" strokeWidth="2" aria-hidden="true">
      <path d="M2 1l6 7-6 7" />
    </svg>
    <svg viewBox="0 0 10 16" className="absolute right-0 bottom-4 w-2.5 h-4" fill="none" stroke="#8a8a8a" strokeWidth="2" aria-hidden="true">
      <path d="M8 1L2 8l6 7" />
    </svg>
  </section>
);

/* ---------- outliner ---------- */

const IconTile = ({ className = '', children }: { className?: string; children: ReactNode }) => (
  <span className={`w-10 h-9 flex items-center justify-center rounded-lg border-2 ${className}`}>{children}</span>
);

const Outliner = () => (
  <section className="flex-[503] min-h-0 flex flex-col rounded-xl overflow-hidden bg-[#282828]">
    <div className="h-[52px] shrink-0 flex items-start pt-1.5 pl-[15px] pr-2">
      <MenuButton label="编辑器类型" outlined className="w-16">
        <OutlinerIcon />
      </MenuButton>
      <MenuButton label="显示模式" outlined className="ml-2.5 w-16">
        <LayersIcon />
      </MenuButton>
      <SearchBox className="ml-8 w-[230px]" />
      <MenuButton label="过滤" outlined className="ml-auto w-16">
        <FilterIcon />
      </MenuButton>
    </div>
    <ul role="tree" className="flex-1 bg-[repeating-linear-gradient(#282828_0_40px,#2b2b2b_40px_80px)] text-[#c6c6c6]">
      <li role="treeitem" className="h-10 pt-1 flex items-center gap-3.5 pl-[45px]">
        <CollectionIcon className="w-7 h-7 text-[#e0e0e0]" />
        场景集合
      </li>
      <li role="treeitem" className="h-10 flex items-center pl-12 pr-[27px] [--hole:#2b2b2b]">
        <svg viewBox="0 0 20 12" className="w-5 h-3" fill="none" stroke="#b0b0b0" strokeWidth="2" aria-hidden="true">
          <path d="M1 1l9 10 9-10" />
        </svg>
        <IconTile className="ml-2.5 border-[#6a6a6a] bg-[#555555] text-[#e6e6e6]">
          <CollectionIcon />
        </IconTile>
        <span className="ml-2.5 pt-1">Collection</span>
        <div className="ml-auto flex items-center gap-3.5 text-[#e6e6e6]">
          <label className="grid place-items-center">
            <input
              type="checkbox"
              defaultChecked
              aria-label="从视图层排除"
              className="col-start-1 row-start-1 appearance-none w-[22px] h-[22px] rounded-xs bg-[#e6e6e6]"
            />
            <Svg className="w-4 h-4 col-start-1 row-start-1 z-10 text-[#282828]">
              <path d="M2 14l8 8L26 6" strokeWidth="6" />
            </Svg>
          </label>
          <button aria-label="隐藏集合">
            <EyeIcon />
          </button>
          <button aria-label="渲染集合">
            <CameraIcon />
          </button>
        </div>
      </li>
      <li role="treeitem" aria-selected="true" className="h-10 flex items-center pl-[5px] pr-[27px] bg-[#334d80] [--hole:#334d80]">
        <EditModeIcon className="w-7 h-7 text-[#dfe6f3]" />
        <span className="ml-6 w-px h-5 bg-[#6b7280]" />
        <svg viewBox="0 0 12 20" className="ml-9 w-3 h-5" fill="none" stroke="#c6c6c6" strokeWidth="2" aria-hidden="true">
          <path d="M1 1l10 9-10 9" />
        </svg>
        <IconTile className="ml-3 border-[#7080a0] bg-[#5d6d92] text-[#c9915f]">
          <MeshTriIcon />
        </IconTile>
        <span className="ml-2 pt-1 text-[#f5a93b]">平面</span>
        <IconTile className="ml-10 border-[#3f7a93] bg-[#235d75] text-[#10bfa0]">
          <MeshDataIcon />
        </IconTile>
        <div className="ml-auto flex items-center gap-3.5 text-[#e6e6e6]">
          <button aria-label="隐藏物体">
            <EyeIcon />
          </button>
          <button aria-label="渲染物体">
            <CameraIcon />
          </button>
        </div>
      </li>
    </ul>
  </section>
);

/* ---------- properties ---------- */

const propertyTabs: { name: string; color: string; active?: boolean; icon: ReactNode }[][] = [
  [{ name: '工具', color: 'text-[#b0b0b0]', icon: <ToolPropIcon /> }],
  [
    { name: '渲染', color: 'text-[#b0b0b0]', icon: <RenderIcon /> },
    { name: '输出', color: 'text-[#b0b0b0]', icon: <OutputIcon /> },
    { name: '视图层', color: 'text-[#b0b0b0]', icon: <LayersIcon /> },
    { name: '场景', color: 'text-[#b0b0b0]', icon: <SceneIcon /> },
    { name: '世界环境', color: 'text-[#b4555f]', icon: <WorldIcon /> },
  ],
  [{ name: '集合', color: 'text-[#d8d8d8]', icon: <CollectionOutlineIcon /> }],
  [
    { name: '物体', color: 'text-[#c0834d]', icon: <ObjectIcon /> },
    { name: '修改器', color: 'text-[#74a2ff]', active: true, icon: <WrenchIcon /> },
    { name: '粒子', color: 'text-[#6488cf]', icon: <ParticlesIcon /> },
    { name: '物理', color: 'text-[#6488cf]', icon: <PhysicsIcon /> },
    { name: '约束', color: 'text-[#6488cf]', icon: <ConstraintIcon /> },
    { name: '数据', color: 'text-[#14b184]', icon: <MeshDataIcon /> },
    { name: '材质', color: 'text-[#b4555f]', icon: <MaterialIcon /> },
  ],
];

const Properties = () => (
  <section className="flex-[1068] min-h-0 flex flex-col rounded-xl overflow-hidden bg-[#303030]">
    <div className="h-[50px] shrink-0 flex items-start pt-[5px] pl-[15px] pr-3.5">
      <MenuButton label="编辑器类型" outlined className="w-16">
        <PropertiesIcon />
      </MenuButton>
      <SearchBox className="ml-[58px] w-[230px]" />
      <MenuButton label="选项" outlined className="ml-auto w-10" />
    </div>
    <div className="flex-1 min-h-0 flex">
      <div role="tablist" aria-orientation="vertical" className="w-[57px] pt-4 flex flex-col gap-[15px] bg-[#1d1d1d]">
        {propertyTabs.map((group, i) => (
          <div key={i} className="border-b border-[#161616] pl-[5px]">
            {group.map((tab) => (
              <button
                key={tab.name}
                role="tab"
                aria-label={tab.name}
                aria-selected={!!tab.active}
                className={`w-full h-14 flex items-center justify-center rounded-l-lg ${tab.color} ${tab.active ? 'bg-[#303030]' : ''}`}
              >
                {tab.icon}
              </button>
            ))}
          </div>
        ))}
      </div>
      <div className="flex-1 pl-[17px] pr-3.5">
        <div className="mt-[22px] h-7 flex items-center pl-1 pr-1.5 text-[#e6e6e6]">
          <ObjectIcon />
          <span className="ml-[18px]">平面</span>
          <button aria-label="固定" className="ml-auto text-[#a8a8a8]">
            <PinIcon />
          </button>
        </div>
        <button className="mt-[38px] w-full h-[38px] flex items-center rounded-md border-2 border-[#3d3d3d] bg-[#545454] text-[#e6e6e6]">
          <Svg className="ml-3 w-5 h-5">
            <path d="M14 1v26M1 14h26" strokeWidth="2.500" />
          </Svg>
          <span className="flex-1 text-center">添加修改器</span>
        </button>
      </div>
    </div>
  </section>
);

/* ---------- status bar ---------- */

const hints = [
  { text: '拾取最短路径', fill: 'M1 13V8a7 7 0 0 1 8-7v12z' },
  { text: '缩放视图', fill: 'M8.500 7h5v10h-5z' },
  { text: '挤出至光标或添加', fill: 'M21 13V8a7 7 0 0 0-8-7v12z' },
];

const StatusBar = () => (
  <footer className="h-[42px] shrink-0 flex items-center pt-1 pl-6 pr-[25px] text-[#8c8c8c]">
    {hints.map((hint) => (
      <div key={hint.text} className="w-[422px] flex items-center gap-[22px]">
        <svg viewBox="0 0 22 30" className="w-[22px] h-[30px]" fill="none" stroke="currentColor" strokeWidth="2" aria-hidden="true">
          <rect x="1" y="1" width="20" height="28" rx="6" />
          <path d={hint.fill} fill="currentColor" stroke="none" />
        </svg>
        {hint.text}
      </div>
    ))}
    <span className="ml-auto">4.1.1</span>
  </footer>
);

const App = () => (
  <div lang="zh-CN" className="bg-[#46506a]">
    <div className="h-screen flex flex-col overflow-hidden rounded-[20px] bg-[#181818] text-[#e0e0e0] text-[22px] leading-7 tabular-nums font-[Inter,'Noto_Sans_CJK_SC',sans-serif]">
      <TitleBar />
      <TopBar />
      <main className="flex-1 min-h-0 flex gap-[7px] px-0.5">
        <div className="flex-1 min-w-0 flex flex-col gap-[7px]">
          <Viewport />
          <Timeline />
        </div>
        <aside className="w-[520px] shrink-0 flex flex-col gap-[7px]">
          <Outliner />
          <Properties />
        </aside>
      </main>
      <StatusBar />
    </div>
  </div>
);

export default App;
